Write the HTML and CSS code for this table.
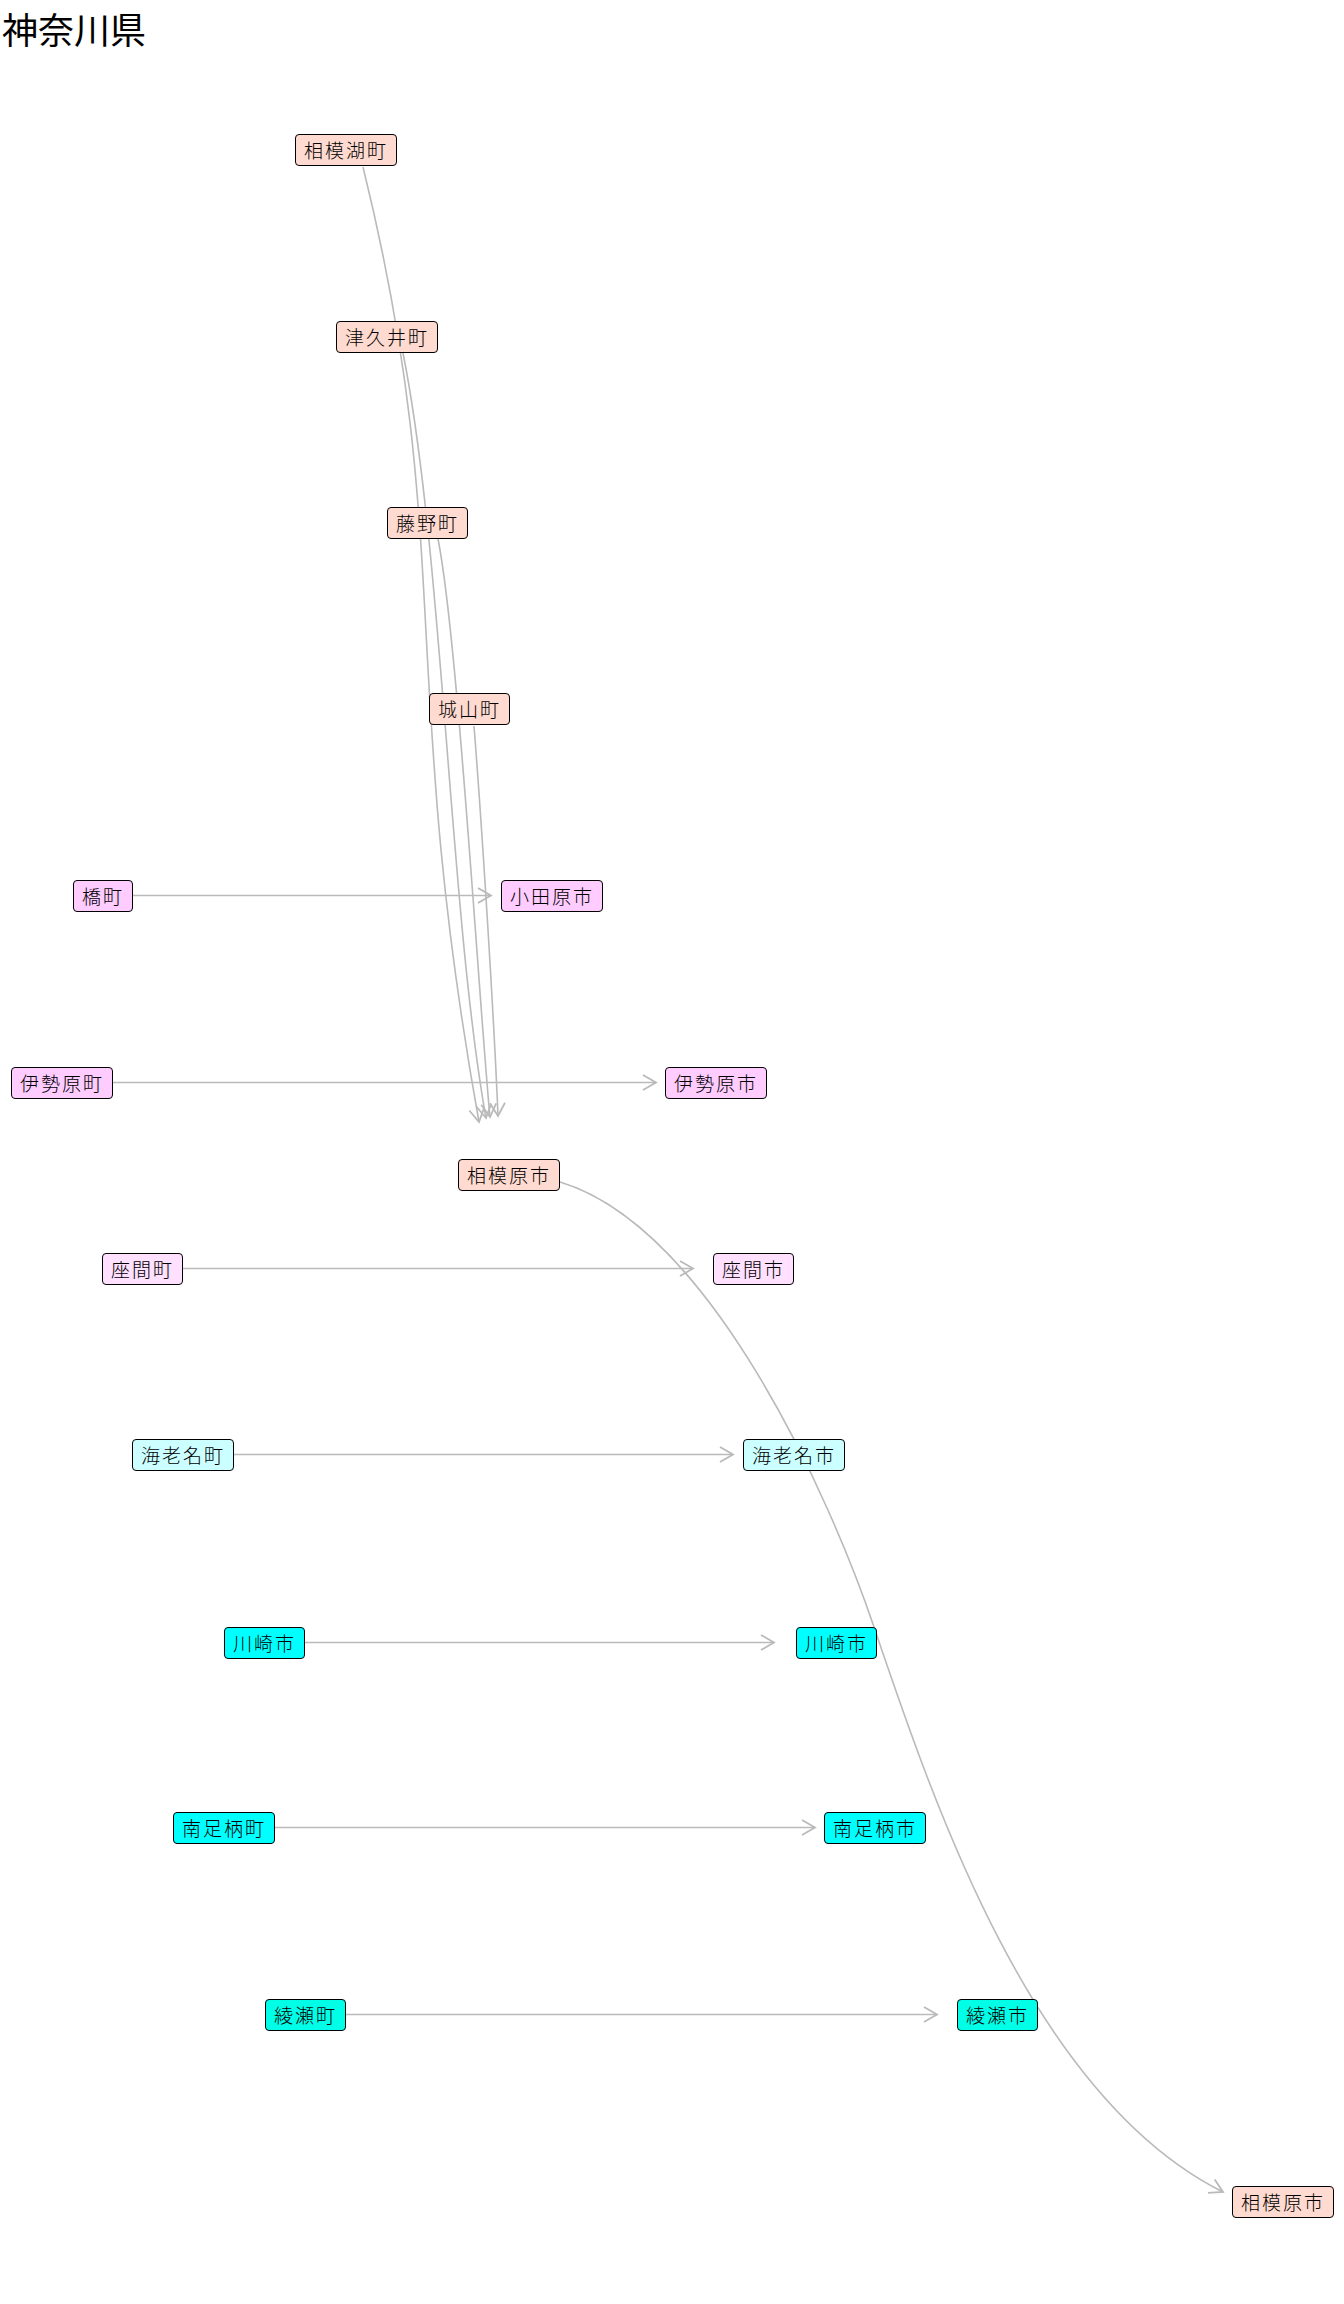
FILE: index.html
```html
<!DOCTYPE html>
<html lang="ja">
<head>
<meta charset="utf-8">
<title>神奈川県</title>
<link rel="stylesheet" href="styles.css">
</head>
<body>
<div class="page">
  <h1 class="title">神奈川県</h1>

  <svg class="edges" width="1344" height="2304" viewBox="0 0 1344 2304" xmlns="http://www.w3.org/2000/svg">
    <defs>
      <marker id="arrow" markerUnits="userSpaceOnUse" markerWidth="20" markerHeight="20" refX="14" refY="8" orient="auto" overflow="visible">
        <path d="M1,0.5 L14,8 L1,15.5" class="arrowhead"/>
      </marker>
    </defs>
    <!-- merge edges into 相模原市 -->
    <path class="edge" d="M363,167 C455,540 398,672 479,1122" marker-end="url(#arrow)"/>
    <path class="edge" d="M403,353 C443,553 450,918 486,1118" marker-end="url(#arrow)"/>
    <path class="edge" d="M438,539 C458,639 480,1017 490,1117" marker-end="url(#arrow)"/>
    <path class="edge" d="M474,726 C482,827 494,1017 498,1116" marker-end="url(#arrow)"/>
    <!-- horizontal renames -->
    <path class="edge" d="M131,895.5 L491,895.5" marker-end="url(#arrow)"/>
    <path class="edge" d="M112,1082.5 L656,1082.5" marker-end="url(#arrow)"/>
    <path class="edge" d="M182,1268.5 L693,1268.5" marker-end="url(#arrow)"/>
    <path class="edge" d="M234,1454.5 L733,1454.5" marker-end="url(#arrow)"/>
    <path class="edge" d="M304,1642.5 L774,1642.5" marker-end="url(#arrow)"/>
    <path class="edge" d="M274,1827.5 L815,1827.5" marker-end="url(#arrow)"/>
    <path class="edge" d="M345,2014.5 L937,2014.5" marker-end="url(#arrow)"/>
    <!-- 相模原市 → 相模原市 -->
    <path class="edge" d="M560,1182 C710,1227 830,1497 874,1627 C935,1807 1033,2097 1223,2192" marker-end="url(#arrow)"/>
  </svg>

  <div class="node salmon" style="left:295px;top:134px">相模湖町</div>
  <div class="node salmon" style="left:336px;top:321px">津久井町</div>
  <div class="node salmon" style="left:387px;top:507px">藤野町</div>
  <div class="node salmon" style="left:429px;top:693px">城山町</div>

  <div class="node pink" style="left:73px;top:880px">橋町</div>
  <div class="node pink" style="left:501px;top:880px">小田原市</div>

  <div class="node pink" style="left:11px;top:1067px">伊勢原町</div>
  <div class="node pink" style="left:665px;top:1067px">伊勢原市</div>

  <div class="node salmon" style="left:458px;top:1159px">相模原市</div>

  <div class="node lavender" style="left:102px;top:1253px">座間町</div>
  <div class="node lavender" style="left:713px;top:1253px">座間市</div>

  <div class="node ice" style="left:132px;top:1439px">海老名町</div>
  <div class="node ice" style="left:743px;top:1439px">海老名市</div>

  <div class="node cyan" style="left:224px;top:1627px">川崎市</div>
  <div class="node cyan" style="left:796px;top:1627px">川崎市</div>

  <div class="node cyan" style="left:173px;top:1812px">南足柄町</div>
  <div class="node cyan" style="left:824px;top:1812px">南足柄市</div>

  <div class="node aqua" style="left:265px;top:1999px">綾瀬町</div>
  <div class="node aqua" style="left:957px;top:1999px">綾瀬市</div>

  <div class="node salmon" style="left:1232px;top:2186px">相模原市</div>
</div>
</body>
</html>
```

FILE: styles.css
```css
html, body {
  margin: 0;
  padding: 0;
  background: #ffffff;
}

.page {
  position: relative;
  width: 1344px;
  height: 2304px;
  overflow: hidden;
  font-family: "Noto Sans CJK JP", "Noto Sans CJK SC", sans-serif;
  color: #000000;
}

.title {
  margin: 10px 0 0 2px;
  font-size: 36px;
  line-height: 36px;
  font-weight: 400;
  letter-spacing: 0;
}

.edges {
  position: absolute;
  left: 0;
  top: 0;
  z-index: 0;
}

.edge {
  fill: none;
  stroke: #bababa;
  stroke-width: 1.6;
}

.arrowhead {
  fill: none;
  stroke: #bababa;
  stroke-width: 1.8;
}

.node {
  position: absolute;
  z-index: 1;
  box-sizing: border-box;
  height: 32px;
  padding: 0 8px;
  border: 1px solid #000000;
  border-radius: 4px;
  font-size: 19px;
  font-weight: 300;
  line-height: 30px;
  letter-spacing: 2px;
  white-space: nowrap;
}

.salmon { background: #ffdad0; }
.pink { background: #ffccff; }
.lavender { background: #ffe0ff; }
.ice { background: #ccffff; }
.cyan { background: #00ffff; }
.aqua { background: #00ffe6; }
```
